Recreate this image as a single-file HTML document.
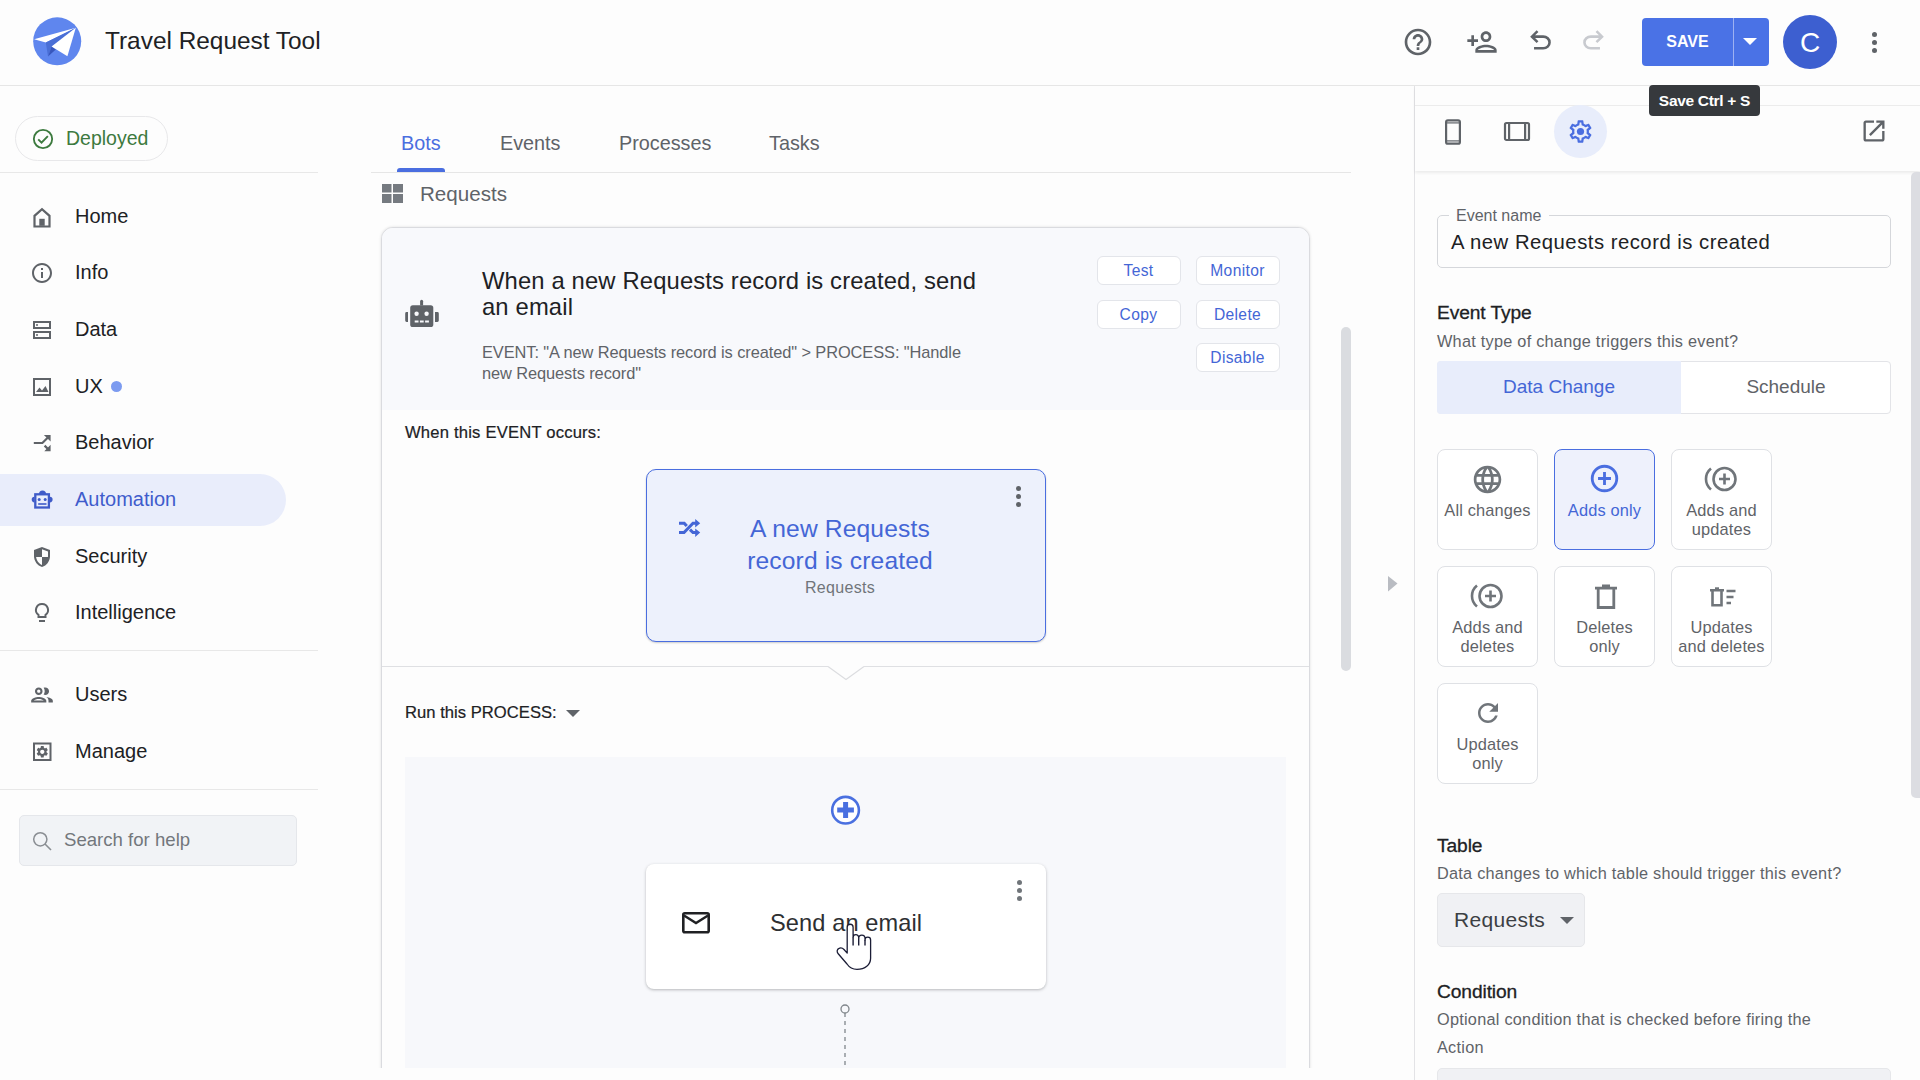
<!DOCTYPE html>
<html><head><meta charset="utf-8">
<style>
*{box-sizing:border-box;margin:0;padding:0}
html,body{width:1920px;height:1080px;overflow:hidden;background:#fdfdfd;font-family:"Liberation Sans",sans-serif;color:#202124}
.a{position:absolute}
.t{position:absolute;white-space:nowrap;line-height:1}
svg{position:absolute;overflow:visible}
.nav{position:absolute;left:0;width:318px;height:52px}
.nav .lb{position:absolute;left:75px;top:16px;font-size:20px;color:#202124;line-height:1}
.nav svg{left:30px;top:15px}
.btn{position:absolute;height:29.5px;width:84px;border:1px solid #e3e5ea;border-radius:6px;background:#fff;color:#4466d6;font-size:15.6px;text-align:center;line-height:28px;letter-spacing:0.35px}
.tile{position:absolute;width:101px;height:101px;border:1px solid #dfe1e5;border-radius:8px;background:#fff;text-align:center;color:#5f6368;font-size:16.4px;line-height:18.8px;letter-spacing:0.15px}
.tile .lb{position:absolute;left:-5px;right:-5px;top:51px}
.tile svg{left:35px;top:14px}
</style></head><body>

<!-- HEADER -->
<div class="a" style="left:0;top:0;width:1920px;height:86px;border-bottom:1px solid #e6e6e6;background:#fdfdfd"></div>


<!-- logo -->
<svg style="left:28px;top:12px" width="60" height="60" viewBox="0 0 60 60">
<circle cx="29.2" cy="29.3" r="24" fill="#5f86ee"/>
<path d="M6.1 27.2 L47.8 15.8 L17.8 30.6 Z" fill="#fff"/>
<path d="M17.8 30.6 L47.8 15.8 L23.6 34.4 L20 44.4 Z" fill="#4a6fd6"/>
<path d="M23.6 34.4 L27.8 37.5 L20 44.4 Z" fill="#3857bd"/>
<path d="M47.8 15.8 L23.6 34.4 L39.4 44.2 Z" fill="#fff"/>
</svg>
<div class="t" style="left:105px;top:29px;font-size:24.4px;color:#202124">Travel Request Tool</div>

<!-- header icons -->
<svg style="left:1402px;top:26px" width="32" height="32" viewBox="0 0 24 24"><path fill="#5f6368" d="M11 18h2v-2h-2v2zm1-16C6.48 2 2 6.48 2 12s4.48 10 10 10 10-4.48 10-10S17.52 2 12 2zm0 18c-4.41 0-8-3.59-8-8s3.59-8 8-8 8 3.59 8 8-3.59 8-8 8zm0-14c-2.21 0-4 1.79-4 4h2c0-1.1.9-2 2-2s2 .9 2 2c0 2-3 1.75-3 5h2c0-2.25 3-2.5 3-5 0-2.21-1.79-4-4-4z"/></svg>
<svg style="left:1466px;top:26px" width="32" height="32" viewBox="0 0 24 24"><path fill="#5f6368" d="M13 8c0-2.21-1.79-4-4-4S5 5.79 5 8s1.79 4 4 4 4-1.79 4-4zm-2 0c0 1.1-.9 2-2 2s-2-.9-2-2 .9-2 2-2 2 .9 2 2zM1 18v2h16v-2c0-2.66-5.33-4-8-4s-8 1.34-8 4zm2 0c.2-.71 3.3-2 6-2 2.69 0 5.78 1.28 6 2H3zM20 15v-3h3v-2h-3V7h-2v3h-3v2h3v3z" transform="translate(24,0) scale(-1,1)"/></svg>
<svg style="left:1525px;top:25px" width="31" height="31" viewBox="0 -960 960 960"><path fill="#5f6368" d="M280-200v-80h284q63 0 109.5-40T720-420q0-60-46.5-100T564-560H312l104 104-56 56-200-200 200-200 56 56-104 104h252q97 0 166.5 63T800-420q0 94-69.5 157T564-200H280Z"/></svg>
<svg style="left:1578px;top:25px" width="31" height="31" viewBox="0 -960 960 960"><path fill="#c8cacf" d="M396-200q-97 0-166.5-63T160-420q0-94 69.5-157T396-640h252L544-744l56-56 200 200-200 200-56-56 104-104H396q-63 0-109.5 40T240-420q0 60 46.5 100T396-280h284v80H396Z"/></svg>

<!-- save button -->
<div class="a" style="left:1642px;top:18px;width:127px;height:48px;background:#4a72e6;border-radius:4px"></div>
<div class="a" style="left:1733px;top:18px;width:1px;height:48px;background:#9db1f2"></div>
<div class="t" style="left:1642px;top:34px;width:91px;text-align:center;font-size:16px;font-weight:bold;color:#fff;letter-spacing:0px">SAVE</div>
<svg style="left:1742px;top:38px" width="16" height="8" viewBox="0 0 16 8"><path d="M1 0 L15 0 L8 7 Z" fill="#fff"/></svg>
<!-- avatar -->
<div class="a" style="left:1783px;top:15px;width:54px;height:54px;border-radius:50%;background:#3d5fd0"></div>
<div class="t" style="left:1783px;top:29px;width:54px;text-align:center;font-size:28px;color:#fff">C</div>
<!-- kebab -->
<div class="a" style="left:1871.5px;top:31.5px;width:5px;height:5px;border-radius:50%;background:#5f6368"></div>
<div class="a" style="left:1871.5px;top:39.5px;width:5px;height:5px;border-radius:50%;background:#5f6368"></div>
<div class="a" style="left:1871.5px;top:47.5px;width:5px;height:5px;border-radius:50%;background:#5f6368"></div>


<!-- SIDEBAR -->
<div class="a" style="left:15px;top:116px;width:153px;height:45px;border:1px solid #e8e8ea;border-radius:23px"></div>
<svg style="left:32px;top:128px" width="22" height="22" viewBox="0 0 24 24"><circle cx="12" cy="12" r="10" fill="none" stroke="#3c7a3e" stroke-width="2"/><path d="M6.8 12.4l3.6 3.6 6.9-7.2" fill="none" stroke="#3c7a3e" stroke-width="2.1"/></svg>
<div class="t" style="left:66px;top:129px;font-size:19.5px;color:#3d7a3f">Deployed</div>
<div class="a" style="left:0;top:172px;width:318px;height:1px;background:#e8e8e8"></div>

<div class="a" style="left:0;top:474px;width:286px;height:52px;background:#e9edfb;border-radius:0 26px 26px 0"></div>

<div class="nav" style="top:190px"><svg width="24" height="24" viewBox="0 0 24 24"><path d="M4.5 21.5V10.8L12 4.2l7.5 6.6v10.7z" fill="none" stroke="#5f6368" stroke-width="2.2" stroke-linejoin="miter"/><rect x="9.3" y="13.8" width="5.4" height="7" fill="#5f6368"/></svg><div class="lb">Home</div></div>
<div class="nav" style="top:246px"><svg width="24" height="24" viewBox="0 0 24 24"><path fill="#5f6368" d="M11 7h2v2h-2zm0 4h2v6h-2zm1-9C6.48 2 2 6.48 2 12s4.48 10 10 10 10-4.48 10-10S17.52 2 12 2zm0 18c-4.41 0-8-3.59-8-8s3.59-8 8-8 8 3.59 8 8-3.59 8-8 8z"/></svg><div class="lb">Info</div></div>
<div class="nav" style="top:303px"><svg width="24" height="24" viewBox="0 0 24 24"><path fill="#5f6368" d="M3 3h18v8H3z M5 5v4h14V5z M3 13h18v8H3z M5 15v4h14v-4z"/><circle cx="7" cy="7" r="1" fill="#5f6368"/><circle cx="7" cy="17" r="1" fill="#5f6368"/></svg><div class="lb">Data</div></div>
<div class="nav" style="top:360px"><svg width="24" height="24" viewBox="0 0 24 24"><path fill="#5f6368" d="M3 3h18v18H3z M5 5v14h14V5z"/><path fill="#5f6368" d="M6 17l3.5-4.5 2.5 3 3.5-4.5 3 6z"/></svg><div class="lb">UX</div><div class="a" style="left:111px;top:21px;width:11px;height:11px;border-radius:50%;background:#7c9bf0"></div></div>
<div class="nav" style="top:416px"><svg style="left:25px;top:9px" width="40" height="35" viewBox="0 0 40 35"><path d="M8.8 18 H17.4 L24.2 11.2 M19.6 20.6 L24.2 25.2" fill="none" stroke="#5f6368" stroke-width="2.2"/><path d="M18.9 10.1 H25.6 V16.6 Z M19.3 26.2 H25.6 V19.8 Z" fill="#5f6368"/></svg><div class="lb">Behavior</div></div>
<div class="nav" style="top:473px"><svg style="left:25px;top:12px" width="32" height="28" viewBox="0 0 32 28"><rect x="10.3" y="9.3" width="13.6" height="13.2" fill="none" stroke="#3f5bc8" stroke-width="2.3"/><path d="M14 9 a3.5 3.5 0 0 1 7 0 Z" fill="#3f5bc8"/><path d="M9.5 11.8 a2.8 2.8 0 0 0 0 5.6 Z M24.8 11.8 a2.8 2.8 0 0 1 0 5.6 Z" fill="#3f5bc8"/><circle cx="14.2" cy="14.4" r="1.5" fill="#3f5bc8"/><circle cx="20.2" cy="14.4" r="1.5" fill="#3f5bc8"/><rect x="13.2" y="18.2" width="8.3" height="1.6" fill="#3f5bc8"/></svg><div class="lb" style="color:#3f5ccc">Automation</div></div>
<div class="nav" style="top:530px"><svg width="24" height="24" viewBox="0 0 24 24"><path fill="#5f6368" d="M12 2L4 5v6c0 5 3.4 9.7 8 11 4.6-1.3 8-6 8-11V5z"/><path fill="#fdfdfd" d="M12 12V4.2L18 6.5V11c0 .3 0 .7-.1 1z M12 12v7.9c-3-1.1-5.5-4.3-5.9-7.9z"/></svg><div class="lb">Security</div></div>
<div class="nav" style="top:586px"><svg width="24" height="24" viewBox="0 0 24 24"><path fill="none" stroke="#5f6368" stroke-width="2" d="M12 3a6 6 0 00-3.5 10.9V16h7v-2.1A6 6 0 0012 3z"/><rect x="9" y="19" width="6" height="2" fill="#5f6368"/></svg><div class="lb">Intelligence</div></div>
<div class="a" style="left:0;top:650px;width:318px;height:1px;background:#e8e8e8"></div>
<div class="nav" style="top:668px"><svg style="left:29px;top:14px" width="26" height="26" viewBox="0 0 24 24"><path fill="#5f6368" d="M9 13.75c-2.34 0-7 1.17-7 3.5V19h14v-1.75c0-2.33-4.66-3.5-7-3.5zM4.34 17c.84-.58 2.87-1.25 4.66-1.25s3.82.67 4.66 1.25H4.34zM9 12c1.93 0 3.5-1.57 3.5-3.5S10.93 5 9 5 5.5 6.57 5.5 8.5 7.07 12 9 12zm0-5c.83 0 1.5.67 1.5 1.5S9.830 10 9 10s-1.5-.67-1.5-1.5S8.17 7 9 7zm7.04 6.810c1.16.84 1.96 1.96 1.96 3.44V19h4v-1.75c0-2.02-3.5-3.17-5.96-3.44zM15 12c1.93 0 3.5-1.57 3.5-3.5S16.93 5 15 5c-.54 0-1.04.13-1.5.35.63.89 1 1.98 1 3.15s-.37 2.26-1 3.15c.46.22.96.35 1.5.35z"/></svg><div class="lb">Users</div></div>
<div class="nav" style="top:725px"><svg width="24" height="24" viewBox="0 0 24 24"><rect x="4" y="3.5" width="16.5" height="16.5" fill="none" stroke="#5f6368" stroke-width="2"/><g transform="translate(5.2,4.7) scale(0.59)"><path fill="#5f6368" d="M19.14 12.94c.04-.3.06-.61.06-.94 0-.32-.02-.64-.07-.94l2.03-1.58c.18-.14.23-.41.12-.61l-1.92-3.32c-.12-.22-.37-.29-.59-.22l-2.39.96c-.5-.38-1.03-.7-1.62-.94l-.36-2.54c-.04-.24-.24-.41-.48-.41h-3.84c-.24 0-.43.17-.47.41l-.36 2.54c-.59.24-1.13.57-1.62.94l-2.39-.96c-.22-.08-.47 0-.59.22L2.74 8.87c-.12.21-.08.47.12.61l2.03 1.58c-.05.3-.09.63-.09.94s.02.64.07.94l-2.03 1.58c-.18.14-.23.41-.12.61l1.92 3.32c.12.22.37.29.59.22l2.39-.96c.5.38 1.03.7 1.62.94l.36 2.54c.05.24.24.41.48.41h3.84c.24 0 .44-.17.47-.41l.36-2.54c.59-.24 1.13-.56 1.62-.94l2.39.96c.22.08.47 0 .59-.22l1.92-3.32c.12-.22.07-.47-.12-.61l-2.01-1.58zM12 15.6c-1.98 0-3.6-1.62-3.6-3.6s1.62-3.6 3.6-3.6 3.6 1.62 3.6 3.6-1.62 3.6-3.6 3.6z"/></g></svg><div class="lb">Manage</div></div>
<div class="a" style="left:0;top:789px;width:318px;height:1px;background:#e8e8e8"></div>
<div class="a" style="left:19px;top:815px;width:278px;height:51px;background:#f1f3f6;border:1px solid #e5e7eb;border-radius:5px"></div>
<svg style="left:32px;top:831px" width="20" height="20" viewBox="0 0 20 20"><circle cx="8.3" cy="8.3" r="6.6" fill="none" stroke="#8a8e93" stroke-width="1.5"/><path d="M13 13L19 19" stroke="#8a8e93" stroke-width="1.6"/></svg>
<div class="t" style="left:64px;top:831px;font-size:18.6px;color:#73777c">Search for help</div>


<!-- MAIN TABS -->
<div class="t" style="left:401px;top:134px;font-size:19.8px;color:#4a6ee0">Bots</div>
<div class="t" style="left:500px;top:134px;font-size:19.8px;color:#5f6368">Events</div>
<div class="t" style="left:619px;top:134px;font-size:19.8px;color:#5f6368">Processes</div>
<div class="t" style="left:769px;top:134px;font-size:19.8px;color:#5f6368">Tasks</div>
<div class="a" style="left:371px;top:172px;width:980px;height:1px;background:#e6e6e6"></div>
<div class="a" style="left:397px;top:168px;width:48px;height:4px;background:#4a6ee0;border-radius:3px 3px 0 0"></div>

<!-- Requests breadcrumb -->
<svg style="left:382px;top:184px" width="21" height="19" viewBox="0 0 21 19"><rect x="0" y="0" width="9.5" height="8.5" fill="#757a80"/><rect x="11" y="0" width="10" height="8.5" fill="#757a80"/><rect x="0" y="10" width="9.5" height="9" fill="#757a80"/><rect x="11" y="10" width="10" height="9" fill="#757a80"/></svg>
<div class="t" style="left:420px;top:184px;font-size:20.6px;color:#5f6368">Requests</div>

<!-- BOT CARD -->
<div class="a" style="left:381px;top:227px;width:929px;height:860px;border:1px solid #dadbdf;border-radius:12px;background:#fdfdfd;box-shadow:0 0 3px rgba(0,0,0,.12)"></div>
<div class="a" style="left:382px;top:228px;width:927px;height:182px;background:#f8f9fc;border-radius:11px 11px 0 0"></div>
<svg style="left:400px;top:292px" width="45" height="43" viewBox="0 0 45 43"><path d="M20.1 13.6V9.3a1.5 1.5 0 0 1 3 0V13.6Z" fill="#5f6368"/><rect x="10.2" y="13.3" width="23.1" height="21.8" rx="2.6" fill="#5f6368"/><path d="M8 20.1V29.9H6.6a1.4 1.4 0 0 1-1.4-1.4V21.5a1.4 1.4 0 0 1 1.4-1.4Z M35 20.1V29.9H37.4a1.4 1.4 0 0 0 1.4-1.4V21.5a1.4 1.4 0 0 0-1.4-1.4Z" fill="#5f6368"/><circle cx="16.6" cy="21.7" r="2.2" fill="#f8f9fc"/><circle cx="26.6" cy="21.7" r="2.2" fill="#f8f9fc"/><rect x="14.7" y="28.5" width="3.8" height="2" fill="#f8f9fc"/><rect x="19.9" y="28.5" width="3.8" height="2" fill="#f8f9fc"/><rect x="25.1" y="28.5" width="3.8" height="2" fill="#f8f9fc"/></svg>
<div class="t" style="left:482px;top:268px;font-size:23.8px;color:#202124;line-height:26px;letter-spacing:0.14px">When a new Requests record is created, send<br>an email</div>
<div class="t" style="left:482px;top:342px;font-size:16.4px;color:#5f6368;line-height:20.6px;letter-spacing:-0.09px">EVENT: "A new Requests record is created" &gt; PROCESS: "Handle<br>new Requests record"</div>

<div class="btn" style="left:1096.5px;top:255.5px">Test</div>
<div class="btn" style="left:1195.5px;top:255.5px">Monitor</div>
<div class="btn" style="left:1096.5px;top:299.5px">Copy</div>
<div class="btn" style="left:1195.5px;top:299.5px">Delete</div>
<div class="btn" style="left:1195.5px;top:342.5px">Disable</div>

<div class="t" style="left:405px;top:425px;font-size:16.6px;color:#202124;letter-spacing:0.2px;-webkit-text-stroke:0.2px #202124">When this EVENT occurs:</div>

<!-- event card -->
<div class="a" style="left:646px;top:469px;width:400px;height:173px;border:1.5px solid #4a6ee0;border-radius:10px;background:#edf1fc;box-shadow:0 1px 2px rgba(0,0,0,.2)"></div>
<svg style="left:670px;top:510px" width="40" height="35" viewBox="0 0 40 35"><path d="M9 13.2H14.2L16.8 16 M9 22.6H14L23 13.2H26.5 M20 19.6L23 22.6H26.5" fill="none" stroke="#4466d6" stroke-width="3"/><path d="M25.2 8.9L30.2 13.2L25.2 17.4Z M25.2 18.5L30.2 22.6L25.2 26.9Z" fill="#4466d6"/></svg>
<div class="t" style="left:646px;top:513px;width:388px;text-align:center;font-size:24.6px;color:#4466d6;line-height:32px;letter-spacing:0.15px">A new Requests<br>record is created</div>
<div class="t" style="left:646px;top:580px;width:388px;text-align:center;font-size:16px;color:#70757a;letter-spacing:0.3px">Requests</div>
<div class="a" style="left:1016px;top:486px;width:5px;height:5px;border-radius:50%;background:#5f6368"></div>
<div class="a" style="left:1016px;top:494px;width:5px;height:5px;border-radius:50%;background:#5f6368"></div>
<div class="a" style="left:1016px;top:502px;width:5px;height:5px;border-radius:50%;background:#5f6368"></div>

<!-- separator with notch -->
<div class="a" style="left:382px;top:666px;width:927px;height:1px;background:#dfe0e3"></div>
<svg style="left:828px;top:665px" width="36" height="18" viewBox="0 0 36 18"><rect x="0" y="0" width="36" height="2" fill="#fdfdfd"/><path d="M0 1.5 L18 14.5 L36 1.5" fill="#fdfdfd" stroke="#dcdde0" stroke-width="1.1"/></svg>

<div class="t" style="left:405px;top:705px;font-size:16.6px;color:#202124;letter-spacing:0.03px;-webkit-text-stroke:0.2px #202124">Run this PROCESS:</div>
<svg style="left:566px;top:710px" width="14" height="8" viewBox="0 0 14 8"><path d="M0 0 L14 0 L7 7 Z" fill="#5f6368"/></svg>

<!-- process area -->
<div class="a" style="left:405px;top:757px;width:881px;height:330px;background:#f7f8fb"></div>
<svg style="left:825px;top:790px" width="40" height="40" viewBox="0 0 40 40"><circle cx="20.55" cy="20.2" r="13.35" fill="#fff" stroke="#4a70e0" stroke-width="2.6"/><path d="M18.1 12H23.1V17.5H28.9V22.6H23.1V28.1H18.1V22.6H12.2V17.5H18.1Z" fill="#4a70e0"/></svg>

<div class="a" style="left:646px;top:864px;width:400px;height:125px;background:#fff;border-radius:8px;box-shadow:0 1px 3px rgba(60,64,67,.35)"></div>
<svg style="left:682px;top:912px" width="28" height="22" viewBox="0 0 28 22"><rect x="1.3" y="1.3" width="25.4" height="19" rx="1.5" fill="none" stroke="#202124" stroke-width="2.6"/><path d="M2 3.5 L14 11 L26 3.5" fill="none" stroke="#202124" stroke-width="2.4"/></svg>
<div class="t" style="left:770px;top:912px;font-size:23.6px;color:#2e2f32;letter-spacing:0.1px">Send an email</div>
<div class="a" style="left:1017px;top:880px;width:5px;height:5px;border-radius:50%;background:#70757a"></div>
<div class="a" style="left:1017px;top:888px;width:5px;height:5px;border-radius:50%;background:#70757a"></div>
<div class="a" style="left:1017px;top:896px;width:5px;height:5px;border-radius:50%;background:#70757a"></div>

<svg style="left:839px;top:1003px" width="12" height="80" viewBox="0 0 12 80"><circle cx="6" cy="6" r="4" fill="none" stroke="#80868b" stroke-width="1.3"/><path d="M6 10 V80" stroke="#80868b" stroke-width="1.3" stroke-dasharray="4 4"/></svg>

<!-- hand cursor -->
<svg style="left:835px;top:924px" width="40" height="50" viewBox="0 0 40 50"><path d="M12.2 29.1 L12.2 3.2 A2.95 2.95 0 0 1 18.1 3.2 L18.1 13.5 A2.8 2.8 0 0 1 23.7 13.5 L23.7 14.3 A3.15 3.15 0 0 1 30 14.3 L30 16 A2.8 2.8 0 0 1 35.6 16 L35.6 34.3 C35.6 41 30 45.4 22 45.4 C17 45.4 14 43 12 40 L3 29.5 C1.6 27.8 2 25.2 4 24.3 C5.6 23.5 7.5 23.9 9 25.5 Z" fill="#fff" stroke="#1b1d36" stroke-width="1.3" stroke-linejoin="round"/><path d="M18.1 13.5 V21.5 M23.7 14.3 V21.5 M30 16 V21.5" stroke="#1b1d36" stroke-width="1.4"/></svg>

<!-- clip bottom -->
<div class="a" style="left:320px;top:1068px;width:1094px;height:12px;background:#fdfdfd"></div>

<!-- main scrollbar -->
<div class="a" style="left:1341px;top:327px;width:10px;height:344px;background:#dadce0;border-radius:5px"></div>
<svg style="left:1387px;top:575px" width="12" height="18" viewBox="0 0 12 18"><path d="M1 1 L10.5 8.5 L1 16.5 Z" fill="#b9bcc2"/></svg>


<!-- RIGHT PANEL -->
<div class="a" style="left:1414px;top:86px;width:1px;height:994px;background:#e3e3e6"></div>
<div class="a" style="left:1415px;top:86px;width:505px;height:85px;background:#fdfdfd;box-shadow:0 2px 3px rgba(0,0,0,.07)"></div><div class="a" style="left:1415px;top:105px;width:505px;height:1px;background:#ececec"></div>
<svg style="left:1441px;top:117px" width="24" height="29" viewBox="0 0 24 29"><rect x="5.1" y="3.3" width="13.8" height="23.4" rx="1.8" fill="none" stroke="#5f6368" stroke-width="2.2"/><rect x="6" y="5.3" width="12" height="1.2" fill="#5f6368"/><rect x="6" y="23.3" width="12" height="1.2" fill="#5f6368"/></svg>
<svg style="left:1503px;top:120px" width="28" height="23" viewBox="0 0 28 23"><rect x="2" y="3" width="24" height="17" rx="1.5" fill="none" stroke="#5f6368" stroke-width="2.2"/><rect x="5" y="4" width="2.2" height="15" fill="#5f6368"/><rect x="21" y="4" width="2.2" height="15" fill="#5f6368"/></svg>
<div class="a" style="left:1554px;top:105px;width:53px;height:53px;border-radius:50%;background:#e8edfb"></div>
<svg style="left:1567px;top:118px" width="27" height="27" viewBox="0 0 24 24"><path fill="#4a6ee0" d="M19.43 12.98c.04-.32.07-.64.07-.98 0-.34-.03-.66-.07-.98l2.11-1.65c.19-.15.24-.42.12-.64l-2-3.46c-.09-.16-.26-.25-.44-.25-.06 0-.12.01-.17.03l-2.49 1c-.52-.4-1.08-.73-1.69-.98l-.38-2.65C14.46 2.18 14.25 2 14 2h-4c-.25 0-.46.18-.49.42l-.38 2.65c-.61.25-1.17.59-1.69.98l-2.49-1c-.06-.02-.12-.03-.18-.03-.17 0-.34.09-.43.25l-2 3.46c-.13.22-.07.49.12.64l2.11 1.65c-.04.32-.07.65-.07.98 0 .33.03.66.07.98l-2.11 1.65c-.19.15-.24.42-.12.64l2 3.46c.09.16.26.25.44.25.06 0 .12-.01.17-.03l2.49-1c.52.4 1.08.73 1.69.98l.38 2.65c.03.24.24.42.49.42h4c.25 0 .46-.18.49-.42l.38-2.65c.61-.25 1.17-.59 1.69-.98l2.49 1c.06.02.12.03.18.03.17 0 .34-.09.43-.25l2-3.46c.12-.22.07-.49-.12-.64l-2.11-1.65zm-1.98-1.71c.04.31.05.52.05.73 0 .21-.02.43-.05.73l-.14 1.13.89.7 1.08.84-.7 1.21-1.27-.51-1.04-.42-.9.68c-.43.32-.84.56-1.25.73l-1.06.43-.16 1.13-.2 1.35h-1.4l-.19-1.35-.16-1.13-1.06-.43c-.43-.18-.83-.41-1.23-.71l-.91-.7-1.06.43-1.27.51-.7-1.21 1.08-.84.89-.7-.14-1.13c-.03-.31-.05-.54-.05-.74s.02-.43.05-.73l.14-1.13-.89-.7-1.08-.84.7-1.21 1.27.51 1.04.42.9-.68c.43-.32.84-.56 1.25-.73l1.06-.43.16-1.13.2-1.35h1.39l.19 1.35.16 1.13 1.06.43c.43.18.83.41 1.23.71l.91.7 1.06-.43 1.27-.51.7 1.21-1.07.85-.89.7.14 1.13z"/><circle cx="12" cy="12" r="3.2" fill="#4a6ee0"/></svg>
<svg style="left:1860px;top:117px" width="28" height="28" viewBox="0 0 24 24"><path fill="#5f6368" d="M19 19H5V5h7V3H5c-1.11 0-2 .9-2 2v14c0 1.1.89 2 2 2h14c1.1 0 2-.9 2-2v-7h-2v7zM14 3v2h3.59l-9.83 9.83 1.41 1.41L19 6.41V10h2V3h-7z"/></svg>

<!-- right scrollbar -->
<div class="a" style="left:1911px;top:172px;width:9px;height:626px;background:#dcdde2;border-radius:5px 0 0 5px"></div>

<!-- tooltip -->
<div class="a" style="left:1649px;top:85px;width:111px;height:31px;background:#36393d;border-radius:4px"></div>
<div class="t" style="left:1649px;top:93px;width:111px;text-align:center;font-size:15.5px;font-weight:bold;color:#fff;letter-spacing:-0.3px">Save Ctrl + S</div>

<!-- event name field -->
<div class="a" style="left:1437px;top:215px;width:454px;height:53px;border:1px solid #d5d7db;border-radius:5px"></div>
<div class="a" style="left:1449px;top:210px;width:100px;height:10px;background:#fdfdfd"></div>
<div class="t" style="left:1456px;top:208px;font-size:16px;color:#5f6368">Event name</div>
<div class="t" style="left:1451px;top:232px;font-size:20.3px;color:#202124;letter-spacing:0.5px">A new Requests record is created</div>

<div class="t" style="left:1437px;top:303px;font-size:19.2px;color:#202124;-webkit-text-stroke:0.3px #202124;letter-spacing:-0.1px">Event Type</div>
<div class="t" style="left:1437px;top:333px;font-size:16.3px;color:#5f6368;letter-spacing:0.25px">What type of change triggers this event?</div>
<div class="a" style="left:1437px;top:361px;width:454px;height:53px;border:1px solid #e3e4e8;border-radius:4px;background:#fff"></div>
<div class="a" style="left:1437px;top:361px;width:244px;height:53px;background:#e8edfb;border-radius:4px 0 0 4px"></div>
<div class="t" style="left:1437px;top:377px;width:244px;text-align:center;font-size:19px;color:#4466d6">Data Change</div>
<div class="t" style="left:1681px;top:377px;width:210px;text-align:center;font-size:19px;color:#5f6368">Schedule</div>

<!-- tiles -->
<div class="tile" style="left:1437px;top:449px"><svg style="left:33px;top:13px" width="33" height="33" viewBox="0 0 24 24"><path fill="#70757a" d="M11.99 2C6.47 2 2 6.48 2 12s4.47 10 9.99 10C17.52 22 22 17.52 22 12S17.52 2 11.99 2zm6.93 6h-2.95c-.32-1.25-.78-2.45-1.38-3.56 1.84.63 3.37 1.91 4.33 3.56zM12 4.04c.83 1.2 1.48 2.53 1.91 3.96h-3.82c.43-1.43 1.08-2.76 1.91-3.96zM4.26 14C4.1 13.36 4 12.69 4 12s.1-1.36.26-2h3.38c-.08.66-.14 1.32-.14 2 0 .68.06 1.34.14 2H4.26zm.82 2h2.95c.32 1.25.78 2.45 1.38 3.56-1.84-.63-3.37-1.9-4.33-3.56zm2.95-8H5.08c.96-1.66 2.49-2.93 4.33-3.56C8.81 5.55 8.35 6.75 8.03 8zM12 19.96c-.83-1.2-1.48-2.53-1.91-3.96h3.82c-.43 1.43-1.08 2.76-1.91 3.96zM14.34 14H9.66c-.09-.66-.16-1.32-.16-2 0-.68.07-1.35.16-2h4.68c.09.65.16 1.32.16 2 0 .68-.07 1.34-.16 2zm.25 5.56c.6-1.11 1.06-2.31 1.38-3.56h2.95c-.96 1.65-2.49 2.93-4.33 3.56zM16.36 14c.08-.66.14-1.32.14-2 0-.68-.06-1.34-.14-2h3.38c.16.64.26 1.31.26 2s-.1 1.36-.26 2h-3.38z"/></svg><div class="lb">All changes</div></div>
<div class="tile" style="left:1554px;top:449px;border:1.5px solid #4a6ee0;background:#eef1fc;color:#4466d6"><svg style="left:34px;top:13px" width="31" height="31" viewBox="0 0 24 24"><circle cx="12" cy="12" r="9.5" fill="none" stroke="#4a6ee0" stroke-width="2.2"/><path d="M12 7v10 M7 12h10" stroke="#4a6ee0" stroke-width="2.2"/></svg><div class="lb">Adds only</div></div>
<div class="tile" style="left:1671px;top:449px"><svg style="left:31px;top:14px" width="36" height="30" viewBox="0 0 36 30"><circle cx="21.5" cy="15" r="11" fill="none" stroke="#70757a" stroke-width="2.6"/><path d="M21.5 9.5v11 M16 15h11" stroke="#70757a" stroke-width="2.6"/><path d="M8 4.5a13.5 13.5 0 000 21" fill="none" stroke="#70757a" stroke-width="2.6"/></svg><div class="lb">Adds and<br>updates</div></div>

<div class="tile" style="left:1437px;top:566px"><svg style="left:31px;top:14px" width="36" height="30" viewBox="0 0 36 30"><circle cx="21.5" cy="15" r="11" fill="none" stroke="#70757a" stroke-width="2.6"/><path d="M21.5 9.5v11 M16 15h11" stroke="#70757a" stroke-width="2.6"/><path d="M8 4.5a13.5 13.5 0 000 21" fill="none" stroke="#70757a" stroke-width="2.6"/></svg><div class="lb">Adds and<br>deletes</div></div>
<div class="tile" style="left:1554px;top:566px"><svg style="left:39px;top:17px" width="24" height="26" viewBox="0 0 24 26"><path d="M1 4.2h22 M4.2 5v18.5h15.6V5" fill="none" stroke="#70757a" stroke-width="2.8"/><rect x="8" y="0.5" width="8" height="3" fill="#70757a"/></svg><div class="lb">Deletes<br>only</div></div>
<div class="tile" style="left:1671px;top:566px"><svg style="left:37px;top:20px" width="28" height="20" viewBox="0 0 28 20"><path d="M1 3.2h14 M3.5 4v14.3h9V4" fill="none" stroke="#70757a" stroke-width="2.6"/><rect x="6" y="0.3" width="4" height="2.5" fill="#70757a"/><path d="M17.5 4h9 M17.5 10h7 M17.5 16h4.5" stroke="#70757a" stroke-width="2.6"/></svg><div class="lb">Updates<br>and deletes</div></div>

<div class="tile" style="left:1437px;top:683px"><svg width="30" height="30" viewBox="0 0 24 24"><path fill="#70757a" d="M17.65 6.35C16.2 4.9 14.21 4 12 4c-4.42 0-7.99 3.58-7.99 8s3.57 8 7.99 8c3.73 0 6.84-2.55 7.73-6h-2.08c-.82 2.33-3.04 4-5.65 4-3.31 0-6-2.69-6-6s2.69-6 6-6c1.66 0 3.14.69 4.22 1.78L13 11h7V4l-2.35 2.35z"/></svg><div class="lb">Updates<br>only</div></div>

<div class="t" style="left:1437px;top:836px;font-size:19.2px;color:#202124;-webkit-text-stroke:0.3px #202124;letter-spacing:-0.1px">Table</div>
<div class="t" style="left:1437px;top:865px;font-size:16.3px;color:#5f6368;letter-spacing:0.25px">Data changes to which table should trigger this event?</div>
<div class="a" style="left:1437px;top:893px;width:148px;height:54px;background:#f0f1f4;border:1px solid #e6e7ea;border-radius:5px"></div>
<div class="t" style="left:1454px;top:909px;font-size:21px;color:#3c4043;letter-spacing:0.3px">Requests</div>
<svg style="left:1560px;top:917px" width="14" height="8" viewBox="0 0 14 8"><path d="M0 0 L14 0 L7 7 Z" fill="#5f6368"/></svg>

<div class="t" style="left:1437px;top:982px;font-size:19.2px;color:#202124;-webkit-text-stroke:0.3px #202124;letter-spacing:-0.1px">Condition</div>
<div class="t" style="left:1437px;top:1011px;font-size:16.3px;color:#5f6368;letter-spacing:0.25px">Optional condition that is checked before firing the</div>
<div class="t" style="left:1437px;top:1039px;font-size:16.3px;color:#5f6368;letter-spacing:0.25px">Action</div>
<div class="a" style="left:1437px;top:1068px;width:454px;height:40px;background:#f0f1f4;border:1px solid #e6e7ea;border-radius:5px"></div>

</body></html>
